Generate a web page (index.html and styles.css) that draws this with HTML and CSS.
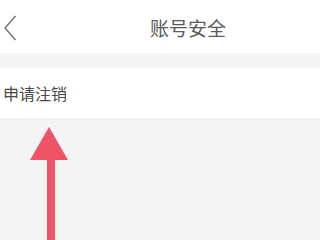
FILE: index.html
```html
<!DOCTYPE html>
<html>
<head>
<meta charset="utf-8">
<link rel="stylesheet" href="styles.css">
</head>
<body>
<div class="page">
  <header class="topbar">
    <span class="back">
      <svg width="14" height="26" viewBox="0 0 14 26"><path d="M12.5 1 L2 13 L12.5 25" fill="none" stroke="#6a6a6a" stroke-width="1.3"/></svg>
    </span>
    <span class="title">账号安全</span>
  </header>
  <div class="gap"></div>
  <div class="row">申请注销</div>
  <svg class="arrow" width="44" height="115" viewBox="0 0 44 115"><polygon points="19,33 2,33 21,0 40,33 27,33 27,115 19,115" fill="#ef5367"/></svg>
</div>
</body>
</html>
```
FILE: styles.css
```css
html, body { margin: 0; padding: 0; }
body {
  width: 320px; height: 240px; overflow: hidden;
  background: #f4f4f4;
  font-family: "Noto Sans CJK SC", "Liberation Sans", sans-serif;
}
.page { position: relative; height: 240px; }
.topbar {
  height: 53px; background: #fff;
  display: flex; align-items: center;
}
.back { display: flex; padding-left: 3px; padding-top: 3px; }
.title {
  margin-left: 133px; padding-top: 3px;
  font-size: 19px; color: #5a5a5a; line-height: 28px;
}
.gap { height: 15px; }
.row {
  height: 50px; background: #fff;
  display: flex; align-items: center;
  padding-left: 3px; padding-bottom: 1px; box-sizing: border-box;
  font-size: 16px; color: #4a4a4a;
}
.arrow { position: absolute; left: 28px; top: 127px; }
```
